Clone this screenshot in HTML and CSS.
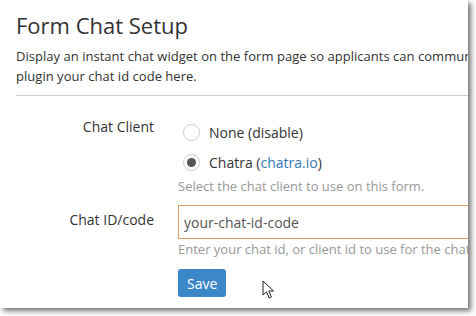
FILE: index.html
```html
<!DOCTYPE html>
<html lang="en">
<head>
  <meta charset="UTF-8" />
  <title>Form Chat Setup</title>
  <link rel="stylesheet" href="styles.css">
</head>
<body>
  <div class="panel">
    <h1>Form Chat Setup</h1>
    <p class="intro">Display an instant chat widget on the form page so applicants can communicate with you. Simply<br>plugin your chat id code here.</p>
    <hr />

    <div class="form-row">
      <label class="row-label">Chat Client</label>
      <div class="row-field">
        <label class="radio"><span class="dot"></span>None (disable)</label>
        <label class="radio"><span class="dot checked"></span>Chatra (<a href="#">chatra.io</a>)</label>
        <p class="help">Select the chat client to use on this form.</p>
      </div>
    </div>

    <div class="form-row">
      <label class="row-label" for="chatId">Chat ID/code</label>
      <div class="row-field">
        <input type="text" id="chatId" value="your-chat-id-code" />
        <p class="help">Enter your chat id, or client id to use for the chat widget.</p>
        <button class="btn-save">Save</button>
      </div>
    </div>

    <svg class="cursor" width="14" height="20" viewBox="0 0 14 20">
      <path d="M1 1 L1 15 L4.5 11.8 L7.2 18 L9.4 17 L6.8 11 L11.5 11 Z" fill="#fff" stroke="#222" stroke-width="1" stroke-linejoin="round"/>
    </svg>
  </div>
</body>
</html>
```

FILE: styles.css
```css
body {
  margin: 0;
  background: #fff;
  font-family: 'Open Sans', sans-serif;
  color: #333;
  width: 476px;
  height: 316px;
  overflow: hidden;
}

.panel {
  position: relative;
  width: 452px;
  height: 308px;
  padding: 0 0 0 16px;
  background: #fff;
  overflow: hidden;
  white-space: nowrap;
  box-shadow: 3px 3px 5px rgba(0, 0, 0, 0.55);
}

h1 {
  margin: 0;
  padding-top: 10px;
  font-size: 22px;
  font-weight: 400;
  line-height: 30px;
  color: #333;
}

.intro {
  margin: 6px 0 0;
  font-size: 13px;
  letter-spacing: 0.03px;
  line-height: 20px;
  color: #333;
}

hr {
  margin: 9px 0 0;
  border: none;
  border-top: 1px solid #ccc;
}

.form-row {
  display: flex;
  gap: 24px;
}

.form-row:first-of-type {
  margin-top: 21px;
}

.row-label {
  width: 138px;
  flex-shrink: 0;
  text-align: right;
  font-size: 14px;
  line-height: 20px;
}

.row-field {
  flex: 1;
}

.radio {
  display: flex;
  align-items: center;
  height: 30px;
  font-size: 14px;
  padding-left: 5px;
}

.dot {
  width: 17px;
  height: 17px;
  border: 1px solid #ccc;
  border-radius: 50%;
  margin-right: 9px;
  box-sizing: border-box;
  position: relative;
}

.dot.checked::after {
  content: '';
  position: absolute;
  left: 3px;
  top: 3px;
  width: 9px;
  height: 9px;
  border-radius: 50%;
  background: #555;
}

a {
  color: #337ab7;
  text-decoration: none;
}

.help {
  margin: 0;
  font-size: 13px;
  line-height: 18px;
  color: #999;
}

.form-row + .form-row {
  margin-top: 10px;
}

.form-row + .form-row .row-label {
  padding-top: 5px;
}

input {
  display: block;
  width: 320px;
  height: 34px;
  padding: 0 5px;
  box-sizing: border-box;
  font-family: 'Open Sans', sans-serif;
  font-size: 14px;
  color: #555;
  border: 1px solid #e0a060;
  outline: none;
  margin-bottom: 1px;
}

.btn-save {
  margin-top: 11px;
  padding: 0 9px;
  height: 28px;
  font-family: 'Open Sans', sans-serif;
  font-size: 14px;
  color: #fff;
  background: #3b87c8;
  border: none;
  border-radius: 3px;
}

.cursor {
  position: absolute;
  left: 262px;
  top: 280px;
}
```
